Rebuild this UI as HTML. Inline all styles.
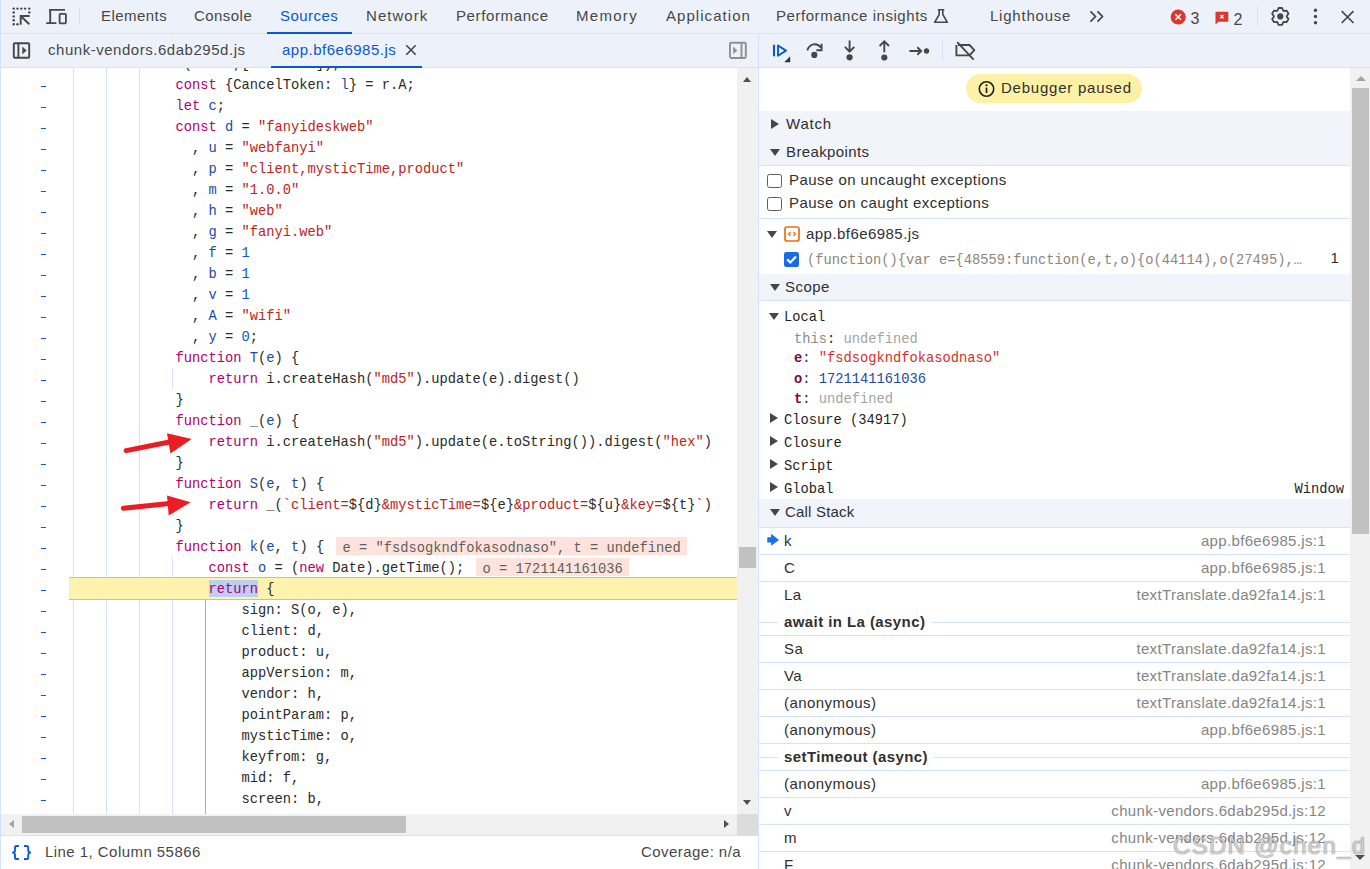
<!DOCTYPE html>
<html><head><meta charset="utf-8">
<style>
*{box-sizing:border-box}
body{margin:0;width:1370px;height:869px;overflow:hidden;position:relative;background:#fff;font-family:"Liberation Sans",sans-serif;color:#303030}
.abs{position:absolute}
.bar{position:absolute;background:#edf2fa}
.tab{position:absolute;top:0;height:33px;line-height:33px;font-size:15px;letter-spacing:0.45px;color:#474747;white-space:nowrap}
#code{position:absolute;left:0;top:68px;width:737px;height:746px;overflow:hidden;background:#fff}
.ln{position:absolute;left:76.5px;height:21px;line-height:21px;white-space:pre;font-family:"Liberation Mono",monospace;font-size:13.75px;color:#1f1f1f}
.sel{background:#bccff5;display:inline-block;line-height:15px;padding-top:2.5px}
.iv{background:#fde3db;color:#5f5f5f;line-height:18px;padding-left:6.5px;padding-top:2.5px;white-space:pre;overflow:hidden}
.g{position:absolute;width:1px;background:#d3e3fd}
.dash{position:absolute;left:41px;width:5px;height:1px;background:#0b57d0}
.ui{position:absolute;font-size:15px;white-space:nowrap;line-height:20px}
.mono{font-family:"Liberation Mono",monospace;font-size:13.75px}
.hr{position:absolute;left:759px;width:592px;height:1px;background:#d3e3fd}
.tri-r{position:absolute;width:0;height:0;border-top:5.2px solid transparent;border-bottom:5.2px solid transparent;border-left:8px solid #474747}
.tri-d{position:absolute;width:0;height:0;border-left:5px solid transparent;border-right:5px solid transparent;border-top:7.5px solid #474747}
</style></head><body>
<div class="bar" style="left:0;top:0;width:1370px;height:34px;border-bottom:1px solid #d3e3fd"></div>
<div class="bar" style="left:0;top:34px;width:1370px;height:34px;border-bottom:1px solid #d3e3fd"></div>
<div class="tab" style="left:101px;top:-1px;color:#474747;letter-spacing:0.45px">Elements</div>
<div class="tab" style="left:194px;top:-1px;color:#474747;letter-spacing:0.45px">Console</div>
<div class="tab" style="left:280px;top:-1px;color:#0b57d0;letter-spacing:0.45px">Sources</div>
<div class="tab" style="left:366px;top:-1px;color:#474747;letter-spacing:1.05px">Network</div>
<div class="tab" style="left:456px;top:-1px;color:#474747;letter-spacing:0.62px">Performance</div>
<div class="tab" style="left:576px;top:-1px;color:#474747;letter-spacing:1.3px">Memory</div>
<div class="tab" style="left:666px;top:-1px;color:#474747;letter-spacing:1.05px">Application</div>
<div class="tab" style="left:776px;top:-1px;color:#474747;letter-spacing:0.55px">Performance insights</div>
<div class="tab" style="left:990px;top:-1px;color:#474747;letter-spacing:0.78px">Lighthouse</div>
<div class="abs" style="left:267px;top:32px;width:85px;height:2px;background:#0b57d0"></div>
<div class="tab" style="left:48px;top:32.5px;letter-spacing:0.53px">chunk-vendors.6dab295d.js</div>
<div class="tab" style="left:282px;top:32.5px;color:#0b57d0;letter-spacing:0.5px">app.bf6e6985.js</div>
<div class="abs" style="left:271px;top:66px;width:151px;height:2px;background:#0b57d0"></div>
<div class="abs" style="left:758px;top:34px;width:1px;height:835px;background:#d3e3fd"></div>
<div id="code">
<div class="g" style="left:73px;top:0;height:746px"></div>
<div class="g" style="left:106px;top:0;height:746px"></div>
<div class="g" style="left:139px;top:0;height:746px"></div>
<div class="g" style="left:172px;top:299.5px;height:21px"></div>
<div class="g" style="left:172px;top:362.5px;height:21px"></div>
<div class="g" style="left:172px;top:425.5px;height:21px"></div>
<div class="g" style="left:172px;top:488.5px;height:21px"></div>
<div class="g" style="left:172px;top:509.5px;height:21px"></div>
<div class="g" style="left:172px;top:530.5px;height:21px"></div>
<div class="g" style="left:205px;top:530.5px;height:21px;background:#8ab4f8"></div>
<div class="g" style="left:172px;top:551.5px;height:21px"></div>
<div class="g" style="left:205px;top:551.5px;height:21px;background:#8ab4f8"></div>
<div class="g" style="left:172px;top:572.5px;height:21px"></div>
<div class="g" style="left:205px;top:572.5px;height:21px;background:#8ab4f8"></div>
<div class="g" style="left:172px;top:593.5px;height:21px"></div>
<div class="g" style="left:205px;top:593.5px;height:21px;background:#8ab4f8"></div>
<div class="g" style="left:172px;top:614.5px;height:21px"></div>
<div class="g" style="left:205px;top:614.5px;height:21px;background:#8ab4f8"></div>
<div class="g" style="left:172px;top:635.5px;height:21px"></div>
<div class="g" style="left:205px;top:635.5px;height:21px;background:#8ab4f8"></div>
<div class="g" style="left:172px;top:656.5px;height:21px"></div>
<div class="g" style="left:205px;top:656.5px;height:21px;background:#8ab4f8"></div>
<div class="g" style="left:172px;top:677.5px;height:21px"></div>
<div class="g" style="left:205px;top:677.5px;height:21px;background:#8ab4f8"></div>
<div class="g" style="left:172px;top:698.5px;height:21px"></div>
<div class="g" style="left:205px;top:698.5px;height:21px;background:#8ab4f8"></div>
<div class="g" style="left:172px;top:719.5px;height:21px"></div>
<div class="g" style="left:205px;top:719.5px;height:21px;background:#8ab4f8"></div>
<div class="g" style="left:172px;top:740.5px;height:21px"></div>
<div class="g" style="left:205px;top:740.5px;height:21px;background:#8ab4f8"></div>
<div class="dash" style="top:-3.5px"></div>
<div class="dash" style="top:17.5px"></div>
<div class="dash" style="top:38.5px"></div>
<div class="dash" style="top:59.5px"></div>
<div class="dash" style="top:80.5px"></div>
<div class="dash" style="top:101.5px"></div>
<div class="dash" style="top:122.5px"></div>
<div class="dash" style="top:143.5px"></div>
<div class="dash" style="top:164.5px"></div>
<div class="dash" style="top:185.5px"></div>
<div class="dash" style="top:206.5px"></div>
<div class="dash" style="top:227.5px"></div>
<div class="dash" style="top:248.5px"></div>
<div class="dash" style="top:269.5px"></div>
<div class="dash" style="top:290.5px"></div>
<div class="dash" style="top:311.5px"></div>
<div class="dash" style="top:332.5px"></div>
<div class="dash" style="top:353.5px"></div>
<div class="dash" style="top:374.5px"></div>
<div class="dash" style="top:395.5px"></div>
<div class="dash" style="top:416.5px"></div>
<div class="dash" style="top:437.5px"></div>
<div class="dash" style="top:458.5px"></div>
<div class="dash" style="top:479.5px"></div>
<div class="dash" style="top:500.5px"></div>
<div class="dash" style="top:521.5px"></div>
<div class="dash" style="top:542.5px"></div>
<div class="dash" style="top:563.5px"></div>
<div class="dash" style="top:584.5px"></div>
<div class="dash" style="top:605.5px"></div>
<div class="dash" style="top:626.5px"></div>
<div class="dash" style="top:647.5px"></div>
<div class="dash" style="top:668.5px"></div>
<div class="dash" style="top:689.5px"></div>
<div class="dash" style="top:710.5px"></div>
<div class="dash" style="top:731.5px"></div>
<div class="abs" style="left:69px;top:509px;width:668px;height:23px;background:#fdf3ad;border-top:1.5px solid #f7c416;border-bottom:1.5px solid #f7c416"></div>
<div class="abs mono iv" style="left:336px;top:469px;width:351px;height:18px">e = "fsdsogkndfokasodnaso", t = undefined</div>
<div class="abs mono iv" style="left:476px;top:490px;width:153px;height:18px">o = 1721141161036</div>
<div class="ln" style="top:-14px">             (     ,[        ]);        </div>
<div class="ln" style="top:7px">            <span style="color:#b3006a">const </span><span style="color:#2a2a2a">{CancelToken: </span><span style="color:#1b48a8">l</span><span style="color:#2a2a2a">} = r.A;</span></div>
<div class="ln" style="top:28px">            <span style="color:#b3006a">let </span><span style="color:#1b48a8">c</span><span style="color:#2a2a2a">;</span></div>
<div class="ln" style="top:49px">            <span style="color:#b3006a">const </span><span style="color:#1b48a8">d</span><span style="color:#2a2a2a"> = </span><span style="color:#c0231c">&quot;fanyideskweb&quot;</span></div>
<div class="ln" style="top:70px">              <span style="color:#2a2a2a">, </span><span style="color:#1b48a8">u</span><span style="color:#2a2a2a"> = </span><span style="color:#c0231c">&quot;webfanyi&quot;</span></div>
<div class="ln" style="top:91px">              <span style="color:#2a2a2a">, </span><span style="color:#1b48a8">p</span><span style="color:#2a2a2a"> = </span><span style="color:#c0231c">&quot;client,mysticTime,product&quot;</span></div>
<div class="ln" style="top:112px">              <span style="color:#2a2a2a">, </span><span style="color:#1b48a8">m</span><span style="color:#2a2a2a"> = </span><span style="color:#c0231c">&quot;1.0.0&quot;</span></div>
<div class="ln" style="top:133px">              <span style="color:#2a2a2a">, </span><span style="color:#1b48a8">h</span><span style="color:#2a2a2a"> = </span><span style="color:#c0231c">&quot;web&quot;</span></div>
<div class="ln" style="top:154px">              <span style="color:#2a2a2a">, </span><span style="color:#1b48a8">g</span><span style="color:#2a2a2a"> = </span><span style="color:#c0231c">&quot;fanyi.web&quot;</span></div>
<div class="ln" style="top:175px">              <span style="color:#2a2a2a">, </span><span style="color:#1b48a8">f</span><span style="color:#2a2a2a"> = </span><span style="color:#0b57d0">1</span></div>
<div class="ln" style="top:196px">              <span style="color:#2a2a2a">, </span><span style="color:#1b48a8">b</span><span style="color:#2a2a2a"> = </span><span style="color:#0b57d0">1</span></div>
<div class="ln" style="top:217px">              <span style="color:#2a2a2a">, </span><span style="color:#1b48a8">v</span><span style="color:#2a2a2a"> = </span><span style="color:#0b57d0">1</span></div>
<div class="ln" style="top:238px">              <span style="color:#2a2a2a">, </span><span style="color:#1b48a8">A</span><span style="color:#2a2a2a"> = </span><span style="color:#c0231c">&quot;wifi&quot;</span></div>
<div class="ln" style="top:259px">              <span style="color:#2a2a2a">, </span><span style="color:#1b48a8">y</span><span style="color:#2a2a2a"> = </span><span style="color:#0b57d0">0</span><span style="color:#2a2a2a">;</span></div>
<div class="ln" style="top:280px">            <span style="color:#b3006a">function </span><span style="color:#1b48a8">T</span><span style="color:#2a2a2a">(</span><span style="color:#1b48a8">e</span><span style="color:#2a2a2a">) {</span></div>
<div class="ln" style="top:301px">                <span style="color:#b3006a">return </span><span style="color:#2a2a2a">i.createHash(</span><span style="color:#c0231c">&quot;md5&quot;</span><span style="color:#2a2a2a">).update(e).digest()</span></div>
<div class="ln" style="top:322px">            <span style="color:#2a2a2a">}</span></div>
<div class="ln" style="top:343px">            <span style="color:#b3006a">function </span><span style="color:#1b48a8">_</span><span style="color:#2a2a2a">(</span><span style="color:#1b48a8">e</span><span style="color:#2a2a2a">) {</span></div>
<div class="ln" style="top:364px">                <span style="color:#b3006a">return </span><span style="color:#2a2a2a">i.createHash(</span><span style="color:#c0231c">&quot;md5&quot;</span><span style="color:#2a2a2a">).update(e.toString()).digest(</span><span style="color:#c0231c">&quot;hex&quot;</span><span style="color:#2a2a2a">)</span></div>
<div class="ln" style="top:385px">            <span style="color:#2a2a2a">}</span></div>
<div class="ln" style="top:406px">            <span style="color:#b3006a">function </span><span style="color:#1b48a8">S</span><span style="color:#2a2a2a">(</span><span style="color:#1b48a8">e</span><span style="color:#2a2a2a">, </span><span style="color:#1b48a8">t</span><span style="color:#2a2a2a">) {</span></div>
<div class="ln" style="top:427px">                <span style="color:#b3006a">return </span><span style="color:#2a2a2a">_(</span><span style="color:#c0231c">`client=</span><span style="color:#2a2a2a">${d}</span><span style="color:#c0231c">&amp;mysticTime=</span><span style="color:#2a2a2a">${e}</span><span style="color:#c0231c">&amp;product=</span><span style="color:#2a2a2a">${u}</span><span style="color:#c0231c">&amp;key=</span><span style="color:#2a2a2a">${t}</span><span style="color:#c0231c">`</span><span style="color:#2a2a2a">)</span></div>
<div class="ln" style="top:448px">            <span style="color:#2a2a2a">}</span></div>
<div class="ln" style="top:469px">            <span style="color:#b3006a">function </span><span style="color:#1b48a8">k</span><span style="color:#2a2a2a">(</span><span style="color:#1b48a8">e</span><span style="color:#2a2a2a">, </span><span style="color:#1b48a8">t</span><span style="color:#2a2a2a">) {</span></div>
<div class="ln" style="top:490px">                <span style="color:#b3006a">const </span><span style="color:#1b48a8">o</span><span style="color:#2a2a2a"> = (</span><span style="color:#b3006a">new </span><span style="color:#2a2a2a">Date).getTime();</span></div>
<div class="ln" style="top:511px">                <span class="sel" style="color:#b3006a">return</span><span style="color:#2a2a2a"> {</span></div>
<div class="ln" style="top:532px">                    <span style="color:#2a2a2a">sign: S(o, e),</span></div>
<div class="ln" style="top:553px">                    <span style="color:#2a2a2a">client: d,</span></div>
<div class="ln" style="top:574px">                    <span style="color:#2a2a2a">product: u,</span></div>
<div class="ln" style="top:595px">                    <span style="color:#2a2a2a">appVersion: m,</span></div>
<div class="ln" style="top:616px">                    <span style="color:#2a2a2a">vendor: h,</span></div>
<div class="ln" style="top:637px">                    <span style="color:#2a2a2a">pointParam: p,</span></div>
<div class="ln" style="top:658px">                    <span style="color:#2a2a2a">mysticTime: o,</span></div>
<div class="ln" style="top:679px">                    <span style="color:#2a2a2a">keyfrom: g,</span></div>
<div class="ln" style="top:700px">                    <span style="color:#2a2a2a">mid: f,</span></div>
<div class="ln" style="top:721px">                    <span style="color:#2a2a2a">screen: b,</span></div></div>
<div class="abs" style="left:0px;top:0px;width:1px;height:869px;background:#d3e3fd;"></div>
<div class="abs" style="left:737px;top:68px;width:21px;height:746px;background:#f1f1f1;"></div>
<div class="abs" style="left:743px;top:77px;width:0;height:0;border-left:4.5px solid transparent;border-right:4.5px solid transparent;border-bottom:5px solid #505050"></div>
<div class="abs" style="left:743px;top:800px;width:0;height:0;border-left:4.5px solid transparent;border-right:4.5px solid transparent;border-top:5px solid #505050"></div>
<div class="abs" style="left:739px;top:547px;width:17px;height:21px;background:#c1c1c1;"></div>
<div class="abs" style="left:1px;top:814px;width:736px;height:21px;background:#f1f1f1;"></div>
<div class="abs" style="left:737px;top:814px;width:21px;height:21px;background:#dcdcdc;"></div>
<div class="abs" style="left:9px;top:820px;width:0;height:0;border-top:4.5px solid transparent;border-bottom:4.5px solid transparent;border-right:5px solid #a3a3a3"></div>
<div class="abs" style="left:724px;top:820px;width:0;height:0;border-top:4.5px solid transparent;border-bottom:4.5px solid transparent;border-left:5px solid #505050"></div>
<div class="abs" style="left:22px;top:816px;width:384px;height:17px;background:#c1c1c1;"></div>
<div class="abs" style="left:1px;top:835px;width:757px;height:1px;background:#d3e3fd;"></div>
<svg class="abs" style="left:0;top:840px" width="40" height="26"><path d="M18.9 6 H16.6 Q15 6 15 7.6 V10.2 Q15 12.6 12.2 12.6 Q15 12.6 15 15 V17.4 Q15 19 16.6 19 H18.9 M24 6 H26.6 Q28.2 6 28.2 7.6 V10.2 Q28.2 12.6 31 12.6 Q28.2 12.6 28.2 15 V17.4 Q28.2 19 26.6 19 H24" fill="none" stroke="#0b5be0" stroke-width="1.9"/></svg>
<div class="ui" style="left:45px;top:842px;color:#474747;letter-spacing:0.45px">Line 1, Column 55866</div>
<div class="ui" style="left:641px;top:842px;color:#474747;letter-spacing:0.45px">Coverage: n/a</div>
<svg class="abs" style="left:0;top:0" width="80" height="33"><circle cx="13.7" cy="8.6" r="1.2" fill="#474747"/><circle cx="17.5" cy="8.6" r="1.2" fill="#474747"/><circle cx="21.3" cy="8.6" r="1.2" fill="#474747"/><circle cx="25.1" cy="8.6" r="1.2" fill="#474747"/><circle cx="29.3" cy="8.6" r="1.2" fill="#474747"/><circle cx="13.7" cy="12.4" r="1.2" fill="#474747"/><circle cx="13.7" cy="16.4" r="1.2" fill="#474747"/><circle cx="13.7" cy="20.3" r="1.2" fill="#474747"/><circle cx="13.7" cy="24.3" r="1.2" fill="#474747"/><circle cx="17.5" cy="24.3" r="1.2" fill="#474747"/><circle cx="29.3" cy="12.4" r="1.2" fill="#474747"/><path d="M20.7 24.7 V16 H29.7 M20.9 16.2 L29.3 24.3" fill="none" stroke="#474747" stroke-width="1.9"/></svg>
<svg class="abs" style="left:0;top:0" width="80" height="33"><path d="M49 9.9 H65 M50.2 9.9 V23.1 M46.2 23.1 H56.4" fill="none" stroke="#474747" stroke-width="1.9"/><rect x="59.6" y="13.8" width="6.3" height="9.5" rx="0.8" fill="none" stroke="#474747" stroke-width="1.8"/></svg>
<div class="abs" style="left:79px;top:8px;width:1px;height:17px;background:#d3e3fd;"></div>
<svg class="abs" style="left:0;top:34px" width="40" height="33"><rect x="13.8" y="9.2" width="15.4" height="14.6" rx="1" fill="none" stroke="#474747" stroke-width="1.9"/><path d="M18.4 9 V24" stroke="#474747" stroke-width="1.9"/><path d="M22.3 12.6 L26.6 16.5 L22.3 20.4 Z" fill="#474747"/></svg>
<svg class="abs" style="left:400px;top:34px" width="22" height="33"><path d="M6.3 11.3 L15.7 20.7 M15.7 11.3 L6.3 20.7" stroke="#474747" stroke-width="1.6"/></svg>
<svg class="abs" style="left:720px;top:34px" width="38" height="33"><rect x="10" y="8.8" width="15.8" height="15.2" rx="1.2" fill="none" stroke="#8f8f8f" stroke-width="1.9"/><path d="M21.5 9 V24" stroke="#8f8f8f" stroke-width="1.9"/><path d="M13.2 12.6 L17.3 16.4 L13.2 20.2 Z" fill="#8f8f8f"/></svg>
<svg class="abs" style="left:930px;top:0" width="22" height="33"><path d="M7.8 9.8 H14.2 M9.2 9.8 V14.5 L4.6 22.3 H17.4 L12.8 14.5 V9.8" fill="none" stroke="#474747" stroke-width="1.6" stroke-linejoin="round"/></svg>
<svg class="abs" style="left:1085px;top:0" width="24" height="33"><path d="M5.5 11.3 L10.5 16.5 L5.5 21.7 M12.5 11.3 L17.5 16.5 L12.5 21.7" fill="none" stroke="#474747" stroke-width="1.7"/></svg>
<svg class="abs" style="left:1168px;top:5px" width="20" height="22"><circle cx="10.2" cy="12" r="7.6" fill="#dc362e"/><path d="M7.4 9.2 L13 14.8 M13 9.2 L7.4 14.8" stroke="#fff" stroke-width="1.5"/></svg>
<div class="ui" style="left:1190.5px;top:9px;font-size:16px;color:#474747">3</div>
<svg class="abs" style="left:1212px;top:5px" width="20" height="22"><path d="M3.5 6.8 H16.3 V16.8 H6.4 L3.5 19.6 Z" fill="#dc362e"/><path d="M8.3 10 L11.5 13.2 M11.5 10 L8.3 13.2" stroke="#fff" stroke-width="1.3"/></svg>
<div class="ui" style="left:1233.5px;top:10px;font-size:16px;color:#474747">2</div>
<div class="abs" style="left:1257px;top:6px;width:1px;height:20px;background:#d3e3fd;"></div>
<svg class="abs" style="left:1260px;top:0" width="40" height="33"><path d="M17.45 10.56 L18.51 7.99 L22.09 7.99 L23.15 10.56 L23.93 11.01 L26.69 10.65 L28.48 13.74 L26.78 15.95 L26.78 16.85 L28.48 19.06 L26.69 22.15 L23.93 21.79 L23.15 22.24 L22.09 24.81 L18.51 24.81 L17.45 22.24 L16.67 21.79 L13.91 22.15 L12.12 19.06 L13.82 16.85 L13.82 15.95 L12.12 13.74 L13.91 10.65 L16.67 11.01 Z" fill="none" stroke="#474747" stroke-width="1.8" stroke-linejoin="round"/><circle cx="20.299999999999955" cy="16.4" r="3.1" fill="#474747"/></svg>
<svg class="abs" style="left:1305px;top:0" width="20" height="33"><circle cx="10.5" cy="10.3" r="1.7" fill="#474747"/><circle cx="10.5" cy="16.5" r="1.7" fill="#474747"/><circle cx="10.5" cy="22.7" r="1.7" fill="#474747"/></svg>
<svg class="abs" style="left:1335px;top:0" width="25" height="33"><path d="M6.7 11.2 L18.5 23 M18.5 11.2 L6.7 23" stroke="#474747" stroke-width="1.7"/></svg>
<svg class="abs" style="left:760px;top:34px" width="230" height="33"><path d="M14 10.8 V22.3" stroke="#0b57d0" stroke-width="2.1"/><path d="M18 11.5 L26 16.6 L18 21.7 Z" fill="none" stroke="#0b57d0" stroke-width="1.9" stroke-linejoin="round"/><path d="M30.2 22.3 V28.2 H24.3 Z" fill="#303030"/><path d="M47.3 16.4 C49.5 9.5 57 8.3 61 13.6" fill="none" stroke="#474747" stroke-width="1.9"/><path d="M61.6 9.8 V16.2 H56.3" fill="none" stroke="#474747" stroke-width="1.9"/><circle cx="54.3" cy="20.9" r="3.1" fill="#474747"/><path d="M89.6 6.5 V17.5 M84.9 12.9 L89.6 17.6 L94.3 12.9" fill="none" stroke="#474747" stroke-width="1.9"/><circle cx="89.6" cy="23.3" r="3.1" fill="#474747"/><path d="M124.3 18.2 V7.4 M119.6 12 L124.3 7.3 L129 12" fill="none" stroke="#474747" stroke-width="1.9"/><circle cx="124.3" cy="23.5" r="3.1" fill="#474747"/><path d="M149.5 17 H161 M157.3 13.2 L161.2 17 L157.3 20.8" fill="none" stroke="#474747" stroke-width="1.9"/><circle cx="166.5" cy="17" r="2.7" fill="#474747"/></svg>
<div class="abs" style="left:942px;top:40px;width:1px;height:20px;background:#d3e3fd;"></div>
<svg class="abs" style="left:950px;top:34px" width="30" height="33"><path d="M8 11 H19.5 L24.3 16.2 L19.5 21.4 H6.4 V11" fill="none" stroke="#474747" stroke-width="1.9" stroke-linejoin="round"/><path d="M7.2 8.2 L23.6 25.6" stroke="#474747" stroke-width="1.9"/></svg>
<div class="abs" style="left:759px;top:111px;width:591px;height:54px;background:#f1f4fb;"></div>
<div class="abs" style="left:759px;top:165px;width:591px;height:1px;background:#d3e3fd;"></div>
<div class="abs" style="left:759px;top:218px;width:591px;height:1px;background:#d3e3fd;"></div>
<div class="abs" style="left:759px;top:274px;width:591px;height:26px;background:#f1f4fb;"></div>
<div class="abs" style="left:759px;top:300px;width:591px;height:1px;background:#d3e3fd;"></div>
<div class="abs" style="left:759px;top:499px;width:591px;height:28px;background:#f1f4fb;"></div>
<div class="abs" style="left:759px;top:527px;width:591px;height:1px;background:#d3e3fd;"></div>
<div class="abs" style="left:966px;top:74px;width:176px;height:29px;border-radius:15px;background:#fdf1a6"></div>
<svg class="abs" style="left:975px;top:78px" width="24" height="22"><circle cx="11.5" cy="11" r="7.2" fill="none" stroke="#1f1f1f" stroke-width="1.6"/><path d="M11.5 9.6 V15" stroke="#1f1f1f" stroke-width="1.7"/><circle cx="11.5" cy="7.3" r="1.1" fill="#1f1f1f"/></svg>
<div class="ui" style="left:1001px;top:78px;letter-spacing:0.77px">Debugger paused</div>
<div class="tri-r" style="left:771px;top:119.3px"></div>
<div class="ui" style="left:786px;top:114px;letter-spacing:0.8px">Watch</div>
<div class="tri-d" style="left:769.5px;top:148.5px"></div>
<div class="ui" style="left:786px;top:142px;letter-spacing:0.38px">Breakpoints</div>
<div class="abs" style="left:767px;top:173.5px;width:15px;height:14.5px;border:1.6px solid #5f5f5f;border-radius:2.5px"></div>
<div class="abs" style="left:767px;top:196.5px;width:15px;height:14.5px;border:1.6px solid #5f5f5f;border-radius:2.5px"></div>
<div class="ui" style="left:789px;top:170px;letter-spacing:0.45px">Pause on uncaught exceptions</div>
<div class="ui" style="left:789px;top:193px;letter-spacing:0.45px">Pause on caught exceptions</div>
<div class="tri-d" style="left:766.5px;top:231px"></div>
<svg class="abs" style="left:782px;top:224px" width="20" height="20"><rect x="3" y="3" width="14" height="14" rx="2" fill="none" stroke="#e8710a" stroke-width="1.7"/><path d="M8.6 8.2 L6.6 10 L8.6 11.8 M11.4 8.2 L13.4 10 L11.4 11.8" fill="none" stroke="#e8710a" stroke-width="1.4"/></svg>
<div class="ui" style="left:806px;top:224px;letter-spacing:0.45px">app.bf6e6985.js</div>
<svg class="abs" style="left:782px;top:250px" width="20" height="20"><rect x="2" y="2" width="15" height="15" rx="2.2" fill="#1a6be6"/><path d="M5.2 9.4 L8.3 12.5 L14 6.6" fill="none" stroke="#fff" stroke-width="2.2"/></svg>
<div class="abs mono" style="left:807px;top:251px;line-height:20px;white-space:pre;color:#8c8580">(function(){var e={48559:function(e,t,o){o(44114),o(27495),…</div>
<div class="ui" style="left:1330.5px;top:248.3px">1</div>
<div class="tri-d" style="left:769.8px;top:284px"></div>
<div class="ui" style="left:785px;top:277px;letter-spacing:0.45px">Scope</div>
<div class="tri-d" style="left:768.5px;top:313px"></div>
<div class="abs mono" style="left:784px;top:308px;line-height:20px;color:#1f1f1f">Local</div>
<div class="abs mono" style="left:794px;top:329.5px;line-height:20px;white-space:pre"><span style="color:#8a8a8a">this</span>: <span style="color:#a3a3a3">undefined</span></div>
<div class="abs mono" style="left:794px;top:349px;line-height:20px;white-space:pre"><b style="color:#7c0a4c">e</b>: <span style="color:#d4302a">"fsdsogkndfokasodnaso"</span></div>
<div class="abs mono" style="left:794px;top:369.5px;line-height:20px;white-space:pre"><b style="color:#7c0a4c">o</b>: <span style="color:#1b4aa6">1721141161036</span></div>
<div class="abs mono" style="left:794px;top:389.5px;line-height:20px;white-space:pre"><b style="color:#7c0a4c">t</b>: <span style="color:#a3a3a3">undefined</span></div>
<div class="tri-r" style="left:770px;top:412.5px"></div>
<div class="abs mono" style="left:784px;top:410.5px;line-height:20px;white-space:pre;color:#1f1f1f">Closure (34917)</div>
<div class="tri-r" style="left:770px;top:435.5px"></div>
<div class="abs mono" style="left:784px;top:433.5px;line-height:20px;white-space:pre;color:#1f1f1f">Closure</div>
<div class="tri-r" style="left:770px;top:458.5px"></div>
<div class="abs mono" style="left:784px;top:456.5px;line-height:20px;white-space:pre;color:#1f1f1f">Script</div>
<div class="tri-r" style="left:770px;top:481.5px"></div>
<div class="abs mono" style="left:784px;top:479.5px;line-height:20px;white-space:pre;color:#1f1f1f">Global</div>
<div class="abs mono" style="left:1294.5px;top:479.5px;line-height:20px;color:#1f1f1f">Window</div>
<div class="tri-d" style="left:769.5px;top:509px"></div>
<div class="ui" style="left:785px;top:502px;letter-spacing:0.2px">Call Stack</div>
<div class="ui" style="left:784px;top:531px;letter-spacing:0.45px">k</div>
<div class="ui" style="right:44px;top:531px;color:#858585;letter-spacing:0.34px">app.bf6e6985.js:1</div>
<div class="abs" style="left:759px;top:554px;width:591px;height:1px;background:#d3e3fd;"></div>
<div class="ui" style="left:784px;top:558px;letter-spacing:0.45px">C</div>
<div class="ui" style="right:44px;top:558px;color:#858585;letter-spacing:0.34px">app.bf6e6985.js:1</div>
<div class="abs" style="left:759px;top:581px;width:591px;height:1px;background:#d3e3fd;"></div>
<div class="ui" style="left:784px;top:585px;letter-spacing:0.45px">La</div>
<div class="ui" style="right:44px;top:585px;color:#858585;letter-spacing:0.34px">textTranslate.da92fa14.js:1</div>
<div class="abs" style="left:759px;top:622px;width:591px;height:1px;background:#d3e3fd;"></div>
<div class="ui" style="left:778px;top:612px;padding:0 6px;background:#fff;font-weight:bold;letter-spacing:0.42px">await in La (async)</div>
<div class="abs" style="left:759px;top:635px;width:591px;height:1px;background:#d3e3fd;"></div>
<div class="ui" style="left:784px;top:639px;letter-spacing:0.45px">Sa</div>
<div class="ui" style="right:44px;top:639px;color:#858585;letter-spacing:0.34px">textTranslate.da92fa14.js:1</div>
<div class="abs" style="left:759px;top:662px;width:591px;height:1px;background:#d3e3fd;"></div>
<div class="ui" style="left:784px;top:666px;letter-spacing:0.45px">Va</div>
<div class="ui" style="right:44px;top:666px;color:#858585;letter-spacing:0.34px">textTranslate.da92fa14.js:1</div>
<div class="abs" style="left:759px;top:689px;width:591px;height:1px;background:#d3e3fd;"></div>
<div class="ui" style="left:784px;top:693px;letter-spacing:0.45px">(anonymous)</div>
<div class="ui" style="right:44px;top:693px;color:#858585;letter-spacing:0.34px">textTranslate.da92fa14.js:1</div>
<div class="abs" style="left:759px;top:716px;width:591px;height:1px;background:#d3e3fd;"></div>
<div class="ui" style="left:784px;top:720px;letter-spacing:0.45px">(anonymous)</div>
<div class="ui" style="right:44px;top:720px;color:#858585;letter-spacing:0.34px">app.bf6e6985.js:1</div>
<div class="abs" style="left:759px;top:743px;width:591px;height:1px;background:#d3e3fd;"></div>
<div class="abs" style="left:759px;top:757px;width:591px;height:1px;background:#d3e3fd;"></div>
<div class="ui" style="left:778px;top:747px;padding:0 6px;background:#fff;font-weight:bold;letter-spacing:0.42px">setTimeout (async)</div>
<div class="abs" style="left:759px;top:770px;width:591px;height:1px;background:#d3e3fd;"></div>
<div class="ui" style="left:784px;top:774px;letter-spacing:0.45px">(anonymous)</div>
<div class="ui" style="right:44px;top:774px;color:#858585;letter-spacing:0.34px">app.bf6e6985.js:1</div>
<div class="abs" style="left:759px;top:797px;width:591px;height:1px;background:#d3e3fd;"></div>
<div class="ui" style="left:784px;top:801px;letter-spacing:0.45px">v</div>
<div class="ui" style="right:44px;top:801px;color:#858585;letter-spacing:0.34px">chunk-vendors.6dab295d.js:12</div>
<div class="abs" style="left:759px;top:824px;width:591px;height:1px;background:#d3e3fd;"></div>
<div class="ui" style="left:784px;top:828px;letter-spacing:0.45px">m</div>
<div class="ui" style="right:44px;top:828px;color:#858585;letter-spacing:0.34px">chunk-vendors.6dab295d.js:12</div>
<div class="abs" style="left:759px;top:851px;width:591px;height:1px;background:#d3e3fd;"></div>
<div class="ui" style="left:784px;top:855px;letter-spacing:0.45px">F</div>
<div class="ui" style="right:44px;top:855px;color:#858585;letter-spacing:0.34px">chunk-vendors.6dab295d.js:12</div>
<div class="abs" style="left:759px;top:878px;width:591px;height:1px;background:#d3e3fd;"></div>
<svg class="abs" style="left:765px;top:533px" width="16" height="14"><path d="M2.3 4.2 H6.1 V0.8 L14 7 L6.1 12.8 V9.6 H2.3 Z" fill="#1a6ef0"/></svg>
<div class="abs" style="left:1350px;top:68px;width:20px;height:801px;background:#f1f1f1;"></div>
<div class="abs" style="left:1356px;top:76px;width:0;height:0;border-left:5px solid transparent;border-right:5px solid transparent;border-bottom:5px solid #a3a3a3"></div>
<div class="abs" style="left:1352px;top:88px;width:17px;height:446px;background:#c1c1c1;"></div>
<div class="abs" style="left:1355px;top:855px;width:0;height:0;border-left:5px solid transparent;border-right:5px solid transparent;border-top:5px solid #505050"></div>
<div class="abs" style="left:1173px;top:831px;font-size:24px;line-height:30px;color:rgba(255,255,255,0.72);text-shadow:0 0 1.5px rgba(0,0,0,0.55),0 0 0.5px rgba(0,0,0,0.4);white-space:nowrap;letter-spacing:1.3px">CSDN @chen_d</div>
<svg class="abs" style="left:0;top:0" width="220" height="540"><g fill="#ec1c24"><path d="M126.2 450.6 L169.5 442" stroke="#ec1c24" stroke-width="5" stroke-linecap="round"/><path d="M167 433.2 L191.7 439 L170.4 453.4 Z"/><path d="M123.4 508.3 L169.5 503.6" stroke="#ec1c24" stroke-width="5" stroke-linecap="round"/><path d="M167 495.4 L190.6 502.3 L168.7 515.5 Z"/></g></svg>
</body></html>
